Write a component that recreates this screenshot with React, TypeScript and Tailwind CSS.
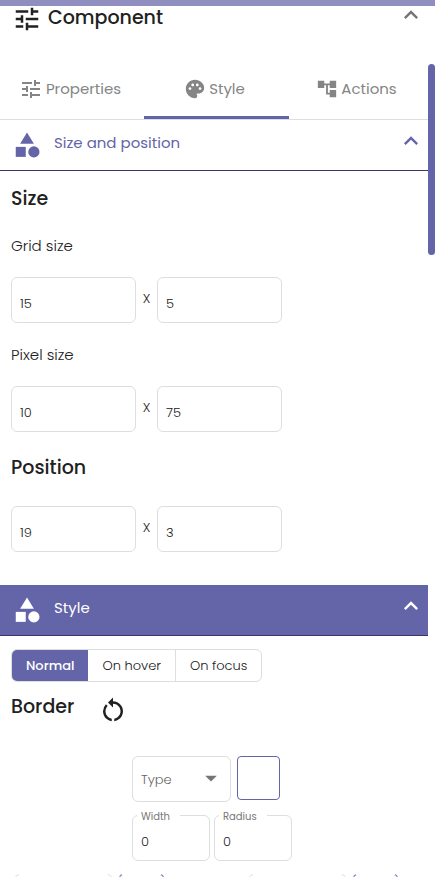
import React from 'react';
import {
  MdAccountTree,
  MdArrowDropDown,
  MdCategory,
  MdExpandLess,
  MdPalette,
  MdRestartAlt,
  MdTune,
} from 'react-icons/md';

const tabs = [
  { label: 'Properties', icon: <MdTune size={24} />, active: false },
  { label: 'Style', icon: <MdPalette size={22} />, active: true },
  { label: 'Actions', icon: <MdAccountTree size={22} />, active: false },
];

interface SectionHeaderProps {
  title: string;
  filled?: boolean;
}

const SectionHeader: React.FC<SectionHeaderProps> = ({ title, filled }) => (
  <button
    type="button"
    className={`flex h-[51px] w-full items-center border-b border-[#3c3568] pl-3 pr-[3px] pb-1 text-left text-[15px] font-normal ${
      filled ? 'bg-[#6464a8] text-white' : 'text-[#6464a8]'
    }`}
  >
    <MdCategory size={30} className="mt-1 mr-3" />
    <span className="flex-1">{title}</span>
    <MdExpandLess size={28} className="mb-1" />
  </button>
);

interface PairProps {
  name: string;
  values: [number, number];
}

const InputPair: React.FC<PairProps> = ({ name, values }) => (
  <div className="flex items-center">
    <input
      aria-label={`${name} first value`}
      defaultValue={values[0]}
      className="h-[46px] w-[125px] rounded-md border border-[#dedede] px-2 pt-2 text-[13px]"
    />
    <span className="w-[21px] pb-0.5 text-center text-[13px]">X</span>
    <input
      aria-label={`${name} second value`}
      defaultValue={values[1]}
      className="h-[46px] w-[125px] rounded-md border border-[#dedede] px-2 pt-2 text-[13px]"
    />
  </div>
);

const NumberField: React.FC<{ label: string; value: number }> = ({ label, value }) => (
  <label className="relative block h-[46px] w-[78px] rounded-md border border-[#dedede]">
    <span className="absolute -top-[7px] left-1 bg-white pl-1 pr-2.5 text-[10px] leading-4 font-normal text-[#777]">
      {label}
    </span>
    <input defaultValue={value} className="h-full w-full bg-transparent px-2 pt-2 text-[13px] outline-none" />
  </label>
);

// Side picker: an outlined type field with an open top edge, and its colour swatch
const SidePicker: React.FC<{ side: string }> = ({ side }) => (
  <div className="flex gap-1.5">
    <button
      type="button"
      aria-label={`${side} border type`}
      className="relative h-[46px] w-[99px] rounded-md border border-[#dedede]"
    >
      <span className="absolute inset-x-1 -top-px h-px bg-white" />
    </button>
    <button
      type="button"
      aria-label={`${side} border color`}
      className="relative h-11 w-[45px] rounded border border-[#6464a8]"
    >
      <span className="absolute inset-x-0.5 -top-px h-px bg-white" />
    </button>
  </div>
);

const App: React.FC = () => {
  return (
    <div className="flex h-screen flex-col overflow-hidden bg-white font-['Poppins','Inter',sans-serif] font-light text-[#212121]">
      <div className="h-[6px] shrink-0 bg-[#918fc0]" />
      <div className="flex min-h-0 flex-1">
        <main className="min-w-0 flex-1">
          <header className="flex h-[52px] items-start pl-3 pr-[3px]">
            <MdTune size={30} className="-mt-0.5 mr-1.5" />
            <h1 className="flex-1 text-[19px] leading-6 font-medium">Component</h1>
            <button type="button" aria-label="Collapse" className="-mt-[5px] text-[#757575]">
              <MdExpandLess size={28} />
            </button>
          </header>

          <nav role="tablist" className="grid h-[62px] grid-cols-[144fr_145fr_139fr] border-b border-[#dedede]">
            {tabs.map((tab) => (
              <button
                key={tab.label}
                type="button"
                role="tab"
                aria-selected={tab.active}
                className={`flex items-center justify-center gap-[3px] border-b-3 pt-1 pr-1 text-[15px] font-normal text-[#858585] ${
                  tab.active ? 'border-[#6464a8]' : 'border-transparent'
                }`}
              >
                {tab.icon}
                {tab.label}
              </button>
            ))}
          </nav>

          <SectionHeader title="Size and position" />
          <section className="px-[11px] pt-4 pb-[33px]">
            <h2 className="text-[19px] leading-6 font-medium">Size</h2>
            <p className="mt-[25px] mb-[21px] text-[15px] leading-5">Grid size</p>
            <InputPair name="Grid size" values={[15, 5]} />
            <p className="mt-[22px] mb-[21px] text-[15px] leading-5">Pixel size</p>
            <InputPair name="Pixel size" values={[10, 75]} />
            <h2 className="mt-6 mb-[26px] text-[19px] leading-6 font-medium">Position</h2>
            <InputPair name="Position" values={[19, 3]} />
          </section>

          <SectionHeader title="Style" filled />
          <section className="px-[11px] pt-[13px]">
            <div className="flex h-[33px] w-fit overflow-hidden rounded-md border border-[#dedede] text-[13px]">
              <button type="button" className="bg-[#6464a8] px-3.5 font-medium text-white">Normal</button>
              <button type="button" className="border-r border-[#dedede] px-3.5">On hover</button>
              <button type="button" className="px-3.5">On focus</button>
            </div>
            <div className="mt-[13px] flex h-8 items-start gap-6">
              <h2 className="text-[19px] leading-6 font-medium">Border</h2>
              <button type="button" aria-label="Reset border">
                <MdRestartAlt size={30} />
              </button>
            </div>

            <div className="mx-auto mt-[29px] w-[164px]">
              <div className="flex gap-1.5">
                <div className="relative">
                  <select
                    aria-label="Border type"
                    className="h-[46px] w-[99px] appearance-none rounded-md border border-[#dedede] px-2 pt-0.5 text-[13px] text-[#666]"
                  >
                    <option>Type</option>
                  </select>
                  <MdArrowDropDown size={28} className="pointer-events-none absolute top-2 right-1.5 text-[#757575]" />
                </div>
                <button type="button" aria-label="Border color" className="h-11 w-[43px] rounded border border-[#6464a8]" />
              </div>
              <div className="mt-[13px] flex gap-1">
                <NumberField label="Width" value={0} />
                <NumberField label="Radius" value={0} />
              </div>
            </div>

            <div className="mt-[13px] flex gap-[84px] pl-[3px]">
              <SidePicker side="Top" />
              <SidePicker side="Right" />
            </div>
          </section>
        </main>
        <div className="w-[7px] shrink-0 pt-[58px]">
          <div className="h-[191px] rounded-full bg-[#6464a8]" />
        </div>
      </div>
    </div>
  );
};

export default App;
